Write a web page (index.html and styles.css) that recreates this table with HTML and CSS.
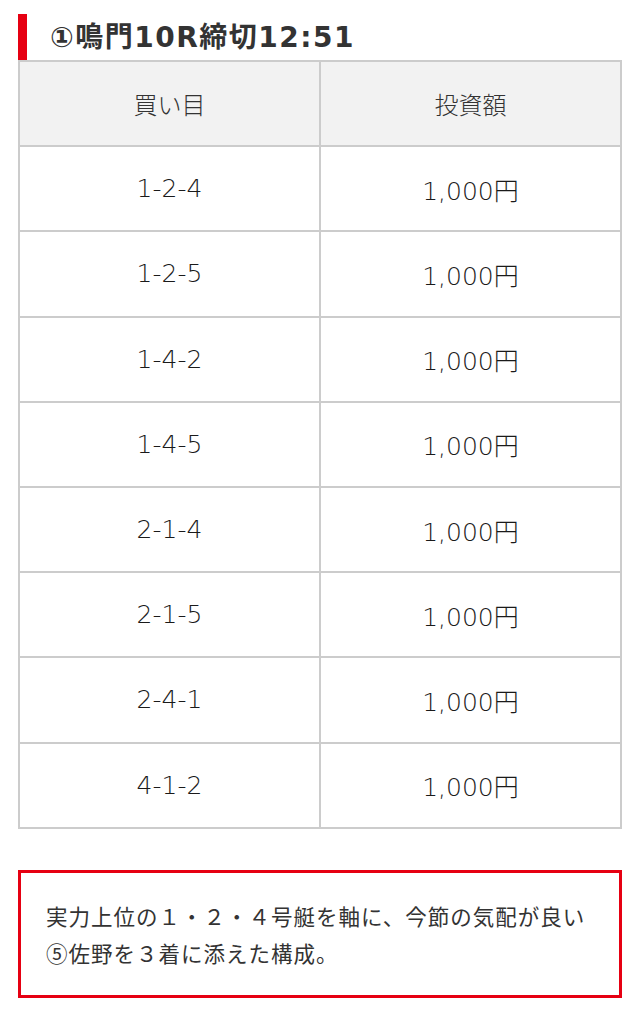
FILE: index.html
```html
<!DOCTYPE html>
<html lang="ja">
<head>
<meta charset="utf-8">
<link rel="stylesheet" href="styles.css">
</head>
<body>
<div class="page">
  <h2 class="heading">①鳴門10R締切12:51</h2>
  <table class="bets">
    <thead>
      <tr><th>買い目</th><th>投資額</th></tr>
    </thead>
    <tbody>
      <tr><td>1-2-4</td><td>1,000円</td></tr>
      <tr><td>1-2-5</td><td>1,000円</td></tr>
      <tr><td>1-4-2</td><td>1,000円</td></tr>
      <tr><td>1-4-5</td><td>1,000円</td></tr>
      <tr><td>2-1-4</td><td>1,000円</td></tr>
      <tr><td>2-1-5</td><td>1,000円</td></tr>
      <tr><td>2-4-1</td><td>1,000円</td></tr>
      <tr><td>4-1-2</td><td>1,000円</td></tr>
    </tbody>
  </table>
  <div class="note">
    <p>実力上位の１・２・４号艇を軸に、今節の気配が良い⑤佐野を３着に添えた構成。</p>
  </div>
</div>
</body>
</html>
```

FILE: styles.css
```css
html, body {
  margin: 0;
  padding: 0;
  background: #fff;
}
.page {
  padding: 14px 18px 0 18px;
  font-family: "Noto Sans CJK JP", "Noto Sans", sans-serif;
  color: #333;
}
.heading {
  margin: 0;
  height: 46px;
  border-left: 9px solid #e60012;
  padding-left: 23px;
  font-family: "DejaVu Sans", "Noto Sans CJK JP", sans-serif;
  font-size: 28px;
  font-weight: 700;
  line-height: 48px;
  color: #333;
  letter-spacing: 1.5px;
}
.bets {
  width: 604px;
  border-collapse: collapse;
  table-layout: fixed;
}
.bets th, .bets td {
  border: 2px solid #cccccc;
  height: 83.2px;
  padding: 0;
  text-align: center;
  vertical-align: middle;
  font-size: 24px;
  font-weight: 300;
  color: #333;
}
.bets th {
  background: #f2f2f2;
}
.bets td {
  font-family: "DejaVu Sans", "Noto Sans CJK JP", sans-serif;
  font-weight: 200;
  font-size: 25px;
  color: #1a1a1a;
}
.note {
  margin-top: 41px;
  width: 604px;
  box-sizing: border-box;
  height: 128px;
  border: 3px solid #e60012;
  padding: 24px 28px 0 25px;
}
.note p {
  margin: 0;
  font-size: 21.5px;
  letter-spacing: 1px;
  line-height: 37px;
  color: #333;
}
```
